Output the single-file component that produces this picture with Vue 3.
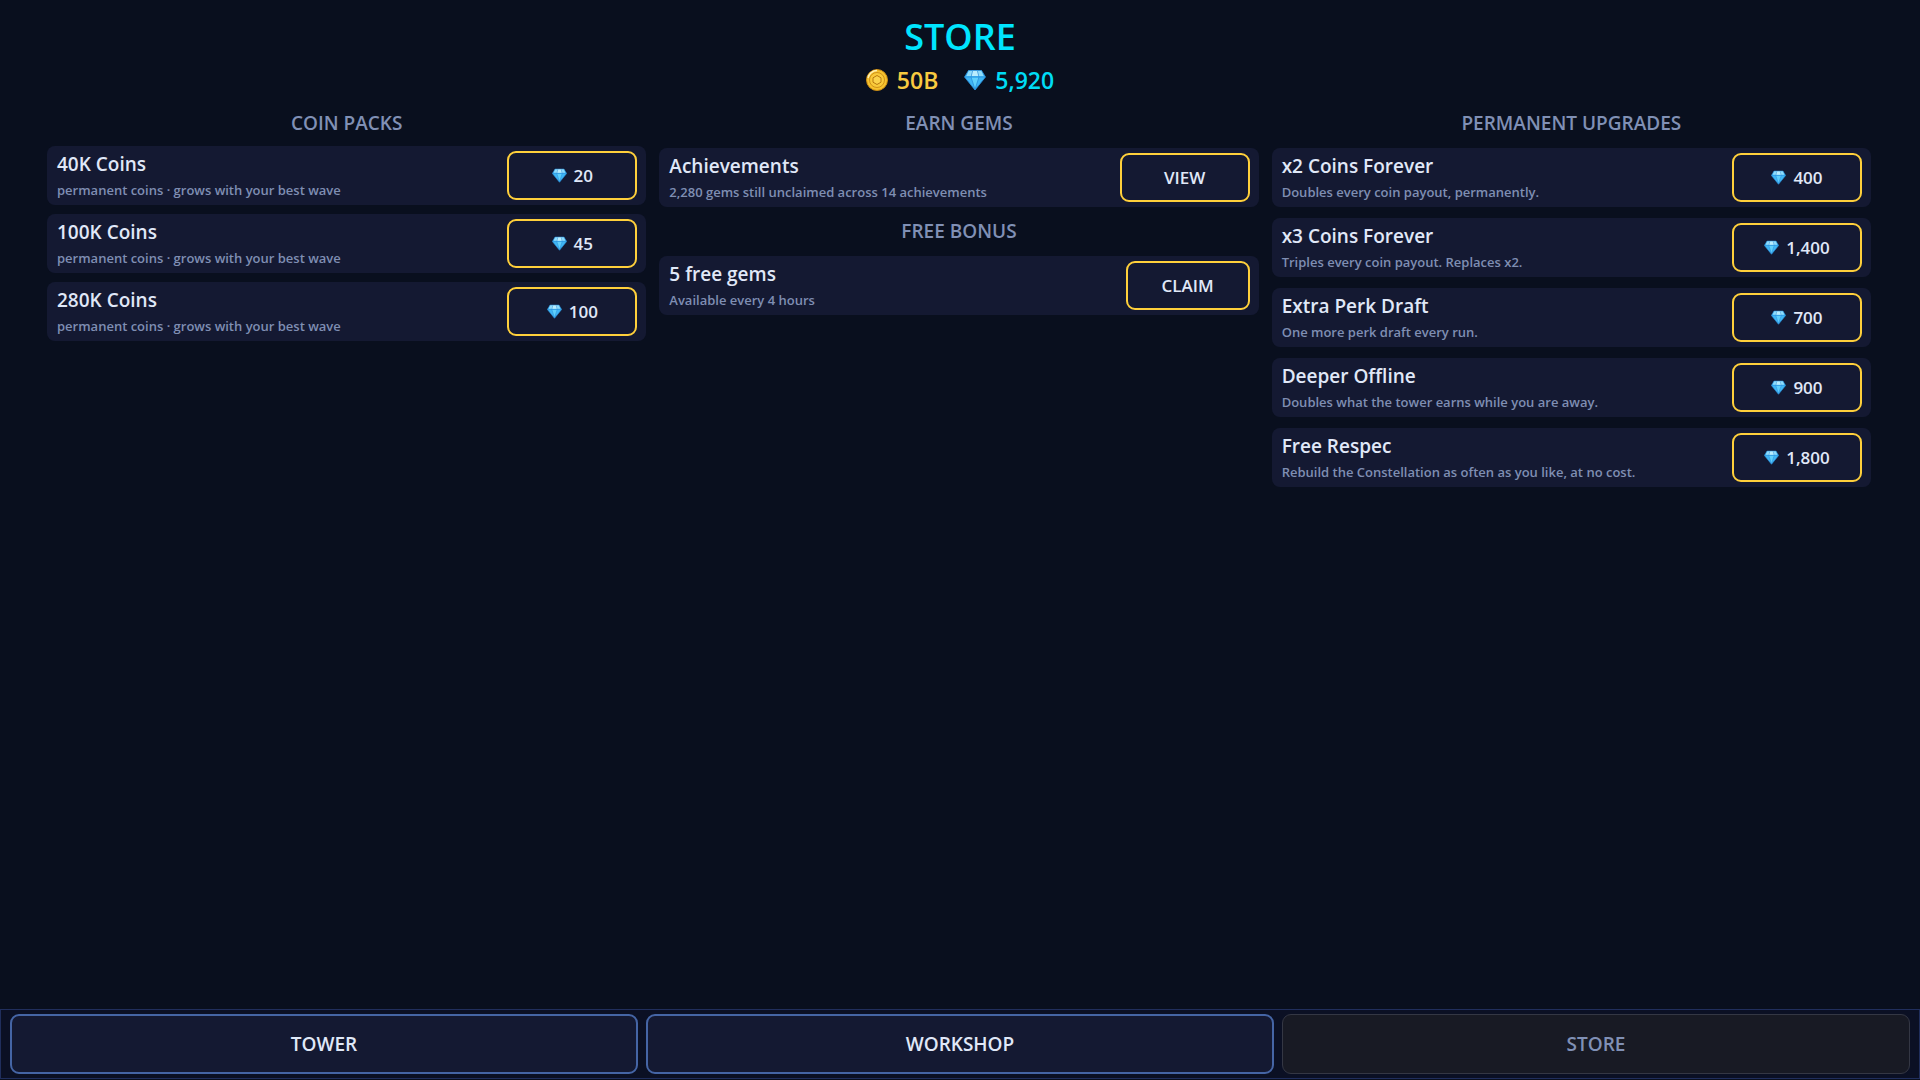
<script setup>
import { h } from 'vue'

const GemIcon = () =>
  h('svg', { viewBox: '0 0 22 21', 'aria-hidden': 'true' }, [
    h('path', { d: 'M4.5 1h13L21.5 7.5 11 20.5.5 7.5z', fill: '#3fb6f5' }),
    h('path', { d: 'M4.5 1h13l2 5.5h-17z', fill: '#8fdcfb' }),
    h('path', { d: 'M8 1h6l1.5 5.5h-9z', fill: '#b9ecfd' }),
    h('path', { d: 'M7 8h8l-4 11.5z', fill: '#5fd0fc' }),
    h('path', {
      d: 'M4.5 1h13L21.5 7.5 11 20.5.5 7.5zM1 7.5h20M7 7.5 11 20l4-12.5M7 7.5 8.5 1.5M15 7.5 13.5 1.5',
      fill: 'none',
      stroke: '#2a8fdc',
      'stroke-width': 0.8,
    }),
  ])

const columns = [
  {
    id: 'packs',
    tight: true,
    sections: [
      {
        title: 'COIN PACKS',
        items: [
          { name: '40K Coins', note: 'permanent coins · grows with your best wave', price: '20' },
          { name: '100K Coins', note: 'permanent coins · grows with your best wave', price: '45' },
          { name: '280K Coins', note: 'permanent coins · grows with your best wave', price: '100' },
        ],
      },
    ],
  },
  {
    id: 'earn',
    sections: [
      {
        title: 'EARN GEMS',
        items: [
          { name: 'Achievements', note: '2,280 gems still unclaimed across 14 achievements', action: 'VIEW' },
        ],
      },
      {
        title: 'FREE BONUS',
        items: [{ name: '5 free gems', note: 'Available every 4 hours', action: 'CLAIM', narrow: true }],
      },
    ],
  },
  {
    id: 'upgrades',
    sections: [
      {
        title: 'PERMANENT UPGRADES',
        items: [
          { name: 'x2 Coins Forever', note: 'Doubles every coin payout, permanently.', price: '400' },
          { name: 'x3 Coins Forever', note: 'Triples every coin payout. Replaces x2.', price: '1,400' },
          { name: 'Extra Perk Draft', note: 'One more perk draft every run.', price: '700' },
          { name: 'Deeper Offline', note: 'Doubles what the tower earns while you are away.', price: '900' },
          { name: 'Free Respec', note: 'Rebuild the Constellation as often as you like, at no cost.', price: '1,800' },
        ],
      },
    ],
  },
]

const tabs = ['TOWER', 'WORKSHOP', 'STORE']
const current = 'STORE'
</script>

<template>
  <div class="screen">
    <header class="header">
      <h1 class="title">STORE</h1>
      <div class="wallet">
        <span class="balance coins">
          <svg class="coin" viewBox="0 0 22 22" aria-hidden="true">
            <circle cx="11" cy="11" r="10.5" fill="#f6c22d" stroke="#c98a14" />
            <path d="M2 9a9.3 9.3 0 0 1 9-7.5" fill="none" stroke="#fff0b0" stroke-width="1.5" />
            <circle cx="11" cy="11" r="7.5" fill="#f9ca3a" stroke="#d0921a" />
            <path d="M11 6.500l4 2.300v4.400L11 15.500l-4-2.300V8.800z" fill="#fbd34c" stroke="#b97a10" />
          </svg>
          50B
        </span>
        <span class="balance gems"><GemIcon class="gem-large" />5,920</span>
      </div>
    </header>

    <main class="columns">
      <div v-for="column in columns" :key="column.id" class="column" :class="{ tight: column.tight }">
        <section v-for="section in column.sections" :key="section.title" class="section">
          <h2 class="heading">{{ section.title }}</h2>
          <article v-for="item in section.items" :key="item.name" class="card">
            <div class="info">
              <h3 class="name">{{ item.name }}</h3>
              <p class="note">{{ item.note }}</p>
            </div>
            <button type="button" class="buy" :class="{ narrow: item.narrow }">
              <template v-if="item.price"><GemIcon class="gem-small" />{{ item.price }}</template>
              <template v-else>{{ item.action }}</template>
            </button>
          </article>
        </section>
      </div>
    </main>

    <nav class="tabs">
      <button v-for="tab in tabs" :key="tab" type="button" class="tab" :disabled="tab === current">
        {{ tab }}
      </button>
    </nav>
  </div>
</template>

<style>
body {
  margin: 0;
  background: #090f1e;
}
</style>

<style scoped>
.screen {
  box-sizing: border-box;
  display: flex;
  flex-direction: column;
  min-height: 100vh;
  padding-bottom: 1px;
  background: #090f1e;
  color: #e0e8f8;
  font-family: "Open Sans", "Noto Sans", sans-serif;
  font-weight: 600;
}

.header {
  display: flex;
  flex-direction: column;
  align-items: center;
  padding-top: 12px;
}

.title {
  margin: 0;
  color: #00e5ff;
  font-size: 36px;
  font-weight: 600;
  line-height: 50px;
}

.wallet {
  display: flex;
  gap: 26px;
  height: 36px;
}

.balance {
  display: flex;
  align-items: center;
  gap: 9px;
  font-size: 23px;
  line-height: 36px;
}

.coins {
  color: #f8ca40;
}

.gems {
  color: #00dcf5;
}

.coin,
.gem-large {
  width: 22px;
  height: 22px;
}

.columns {
  display: grid;
  grid-template-columns: repeat(3, 1fr);
  gap: 13px;
  padding: 12px 49px 24px 47px;
}

.column {
  display: flex;
  flex-direction: column;
  gap: 11px;
}

.section {
  display: flex;
  flex-direction: column;
  gap: 11px;
}

.tight .section {
  gap: 9px;
}

.heading {
  margin: 0;
  color: #8090b5;
  font-size: 19px;
  font-weight: 600;
  line-height: 27px;
  text-align: center;
}

.card {
  box-sizing: border-box;
  display: flex;
  align-items: center;
  justify-content: space-between;
  height: 59px;
  padding: 0 9px 0 10px;
  border-radius: 8px;
  background: #141932;
}

.info {
  padding-top: 2px;
}

.name,
.note {
  margin: 0;
  font-weight: 600;
}

.name {
  font-size: 19px;
  line-height: 26px;
}

.note {
  color: #7f8eb2;
  font-size: 13px;
  line-height: 26px;
}

.buy {
  display: flex;
  align-items: center;
  justify-content: center;
  gap: 7px;
  box-sizing: border-box;
  width: 130px;
  height: 49px;
  padding: 0;
  border: 2px solid #ffd03b;
  border-radius: 9px;
  background: #141932;
  color: #e0e8f8;
  font: inherit;
  font-size: 17px;
}

.narrow {
  width: 124px;
}

.gem-small {
  width: 15px;
  height: 15px;
}

.tabs {
  display: grid;
  grid-template-columns: repeat(3, 1fr);
  gap: 8px;
  margin-top: auto;
  padding: 4px 9px;
  border: 1px solid #202e5c;
  background: #0b1024;
}

.tab {
  height: 60px;
  padding: 0;
  border: 2px solid #4565a5;
  border-radius: 9px;
  background: #141932;
  color: #e0e8f8;
  font: inherit;
  font-size: 19px;
}

.tab:disabled {
  border: 1px solid #343744;
  background: #181a24;
  color: #8090b5;
}
</style>
